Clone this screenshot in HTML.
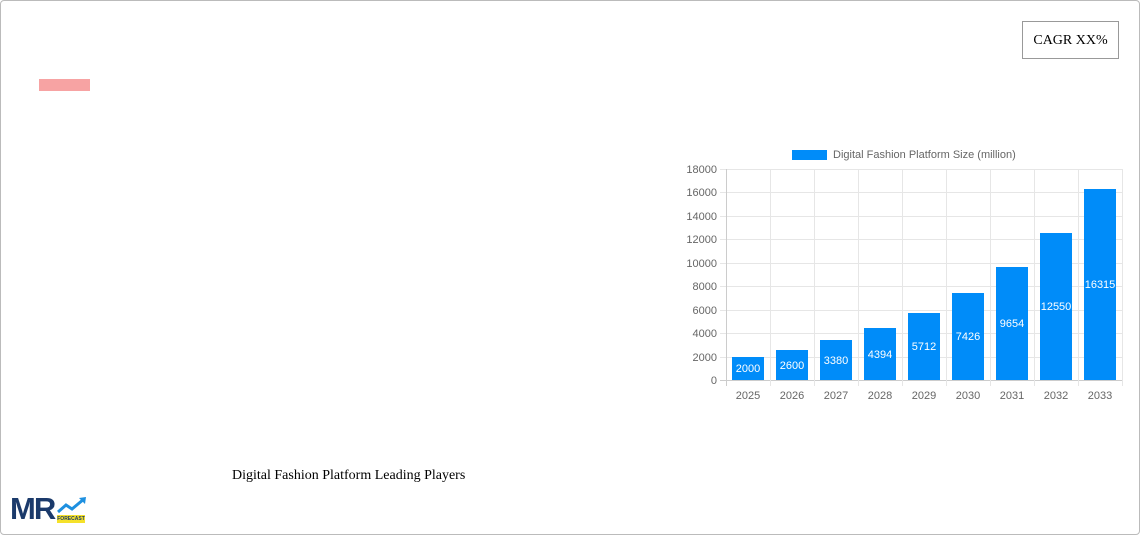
<!DOCTYPE html>
<html><head><style>
body{margin:0;width:1140px;height:535px;background:#fff;font-family:"Liberation Sans",sans-serif;position:relative;overflow:hidden}
.frame{position:absolute;left:0;top:0;width:1138px;height:533px;border:1px solid #bbb;border-radius:4px}
.a{position:absolute}
.yl{position:absolute;width:40px;text-align:right;font-size:11px;color:#666;left:677px}
.xl{position:absolute;font-size:11px;color:#666;width:44px;text-align:center;top:390px}
.bar{position:absolute;background:#008cf9;width:32px;color:#fff;font-size:11px;text-align:center}
.bar span{position:relative;top:1px}
.gh{position:absolute;left:720px;width:402px;height:1px;background:#e6e6e6}
.gv{position:absolute;top:169px;height:217px;width:1px;background:#e6e6e6}
</style></head><body>
<div class="frame"></div>
<div class="a" style="left:1022px;top:21px;width:95px;height:36px;border:1px solid #999;font-family:'Liberation Serif',serif;font-size:14px;line-height:37px;text-align:center">CAGR XX%</div>
<div class="a" style="left:39px;top:79px;width:51px;height:12px;background:#f7a3a3"></div>
<div class="a" style="left:232px;top:468px;font-family:'Liberation Serif',serif;font-size:14px">Digital Fashion Platform Leading Players</div>
<div class="a" style="left:792px;top:150px;width:35px;height:10px;background:#008cf9"></div>
<div class="a" style="left:833px;top:149px;font-size:11px;color:#666">Digital Fashion Platform Size (million)</div>
<div class="gh" style="top:169px"></div><div class="gh" style="top:192px"></div><div class="gh" style="top:216px"></div><div class="gh" style="top:239px"></div><div class="gh" style="top:263px"></div><div class="gh" style="top:286px"></div><div class="gh" style="top:310px"></div><div class="gh" style="top:333px"></div><div class="gh" style="top:357px"></div>
<div class="gh" style="top:380px;background:#ccc"></div>
<div class="gv" style="left:726px;background:#ccc"></div><div class="gv" style="left:770px"></div><div class="gv" style="left:814px"></div><div class="gv" style="left:858px"></div><div class="gv" style="left:902px"></div><div class="gv" style="left:946px"></div><div class="gv" style="left:990px"></div><div class="gv" style="left:1034px"></div><div class="gv" style="left:1078px"></div><div class="gv" style="left:1122px"></div>
<div class="yl" style="top:164px">18000</div><div class="yl" style="top:187px">16000</div><div class="yl" style="top:211px">14000</div><div class="yl" style="top:234px">12000</div><div class="yl" style="top:258px">10000</div><div class="yl" style="top:281px">8000</div><div class="yl" style="top:305px">6000</div><div class="yl" style="top:328px">4000</div><div class="yl" style="top:352px">2000</div><div class="yl" style="top:375px">0</div>
<div class="bar" style="left:732px;top:357px;height:23px;line-height:23px"><span>2000</span></div>
<div class="bar" style="left:776px;top:350px;height:30px;line-height:30px"><span>2600</span></div>
<div class="bar" style="left:820px;top:340px;height:40px;line-height:40px"><span>3380</span></div>
<div class="bar" style="left:864px;top:328px;height:52px;line-height:52px"><span>4394</span></div>
<div class="bar" style="left:908px;top:313px;height:67px;line-height:67px"><span>5712</span></div>
<div class="bar" style="left:952px;top:293px;height:87px;line-height:87px"><span>7426</span></div>
<div class="bar" style="left:996px;top:267px;height:113px;line-height:113px"><span>9654</span></div>
<div class="bar" style="left:1040px;top:233px;height:147px;line-height:147px"><span>12550</span></div>
<div class="bar" style="left:1084px;top:189px;height:191px;line-height:191px"><span>16315</span></div>
<div class="xl" style="left:726px">2025</div><div class="xl" style="left:770px">2026</div><div class="xl" style="left:814px">2027</div><div class="xl" style="left:858px">2028</div><div class="xl" style="left:902px">2029</div><div class="xl" style="left:946px">2030</div><div class="xl" style="left:990px">2031</div><div class="xl" style="left:1034px">2032</div><div class="xl" style="left:1078px">2033</div>
<div class="a" style="left:10px;top:494px;font-size:31px;font-weight:bold;color:#1b3a6b;letter-spacing:-2px;line-height:30px">MR</div>
<div class="a" style="left:57px;top:515px;width:28px;height:8px;background:#f5e12a;font-size:5px;font-weight:bold;text-align:center;line-height:8px;color:#1b3a6b">FORECAST</div>
<svg class="a" style="left:56px;top:496px" width="32" height="20"><polyline points="2,16 10,9 16,13 28,3" fill="none" stroke="#1e90e0" stroke-width="3"/><polygon points="23,2 30,1 29,8" fill="#1e90e0"/></svg>
</body></html>
